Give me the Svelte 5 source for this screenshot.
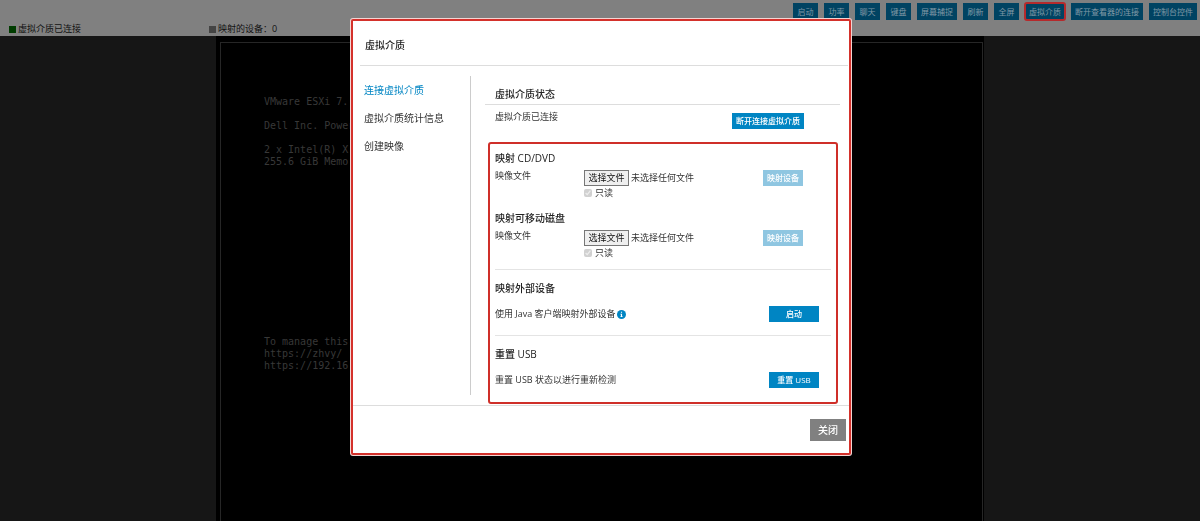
<script>
	const tools = ['启动', '功率', '聊天', '键盘', '屏幕捕捉', '刷新', '全屏', '虚拟介质', '断开查看器的连接', '控制台控件'];

	const tabs = ['连接虚拟介质', '虚拟介质统计信息', '创建映像'];

	const drives = [
		{ id: 'cd', title: '映射 CD/DVD' },
		{ id: 'disk', title: '映射可移动磁盘' }
	];

	const bootLines = ['VMware ESXi 7.', '', 'Dell Inc. Power', '', '2 x Intel(R) X', '255.6 GiB Memo'];
	const manageLines = ['To manage this', 'https://zhvy/', 'https://192.16'];

	let activeTool = $state('虚拟介质');
	let activeTab = $state(tabs[0]);
	let open = $state(true);
	let fileInputs = $state({});
	let files = $state({ cd: '', disk: '' });

	function selectTool(tool) {
		activeTool = tool;
		if (tool === '虚拟介质') open = true;
	}

	function selectTab(event, tab) {
		event.preventDefault();
		activeTab = tab;
	}
</script>

<div class="page">
	<header>
		<div class="toolbar">
			{#each tools as tool}
				<button class="tool" class:active={tool === activeTool} onclick={() => selectTool(tool)}>{tool}</button>
			{/each}
		</div>
		<div class="statusBar">
			<div class="status"><span class="square green"></span>虚拟介质已连接</div>
			<div class="status"><span class="square"></span>映射的设备：0</div>
		</div>
	</header>

	<main class="console">
		<div class="screen">
			<pre>{bootLines.join('\n')}</pre>
			<pre class="manage">{manageLines.join('\n')}</pre>
		</div>
	</main>
</div>

{#if open}
	<div class="overlay">
		<div class="modal" role="dialog" aria-labelledby="modalTitle">
			<h1 id="modalTitle">虚拟介质</h1>

			<div class="modalBody">
				<nav>
					{#each tabs as tab}
						<a href="#media" class:current={tab === activeTab} onclick={(e) => selectTab(e, tab)}>{tab}</a>
					{/each}
				</nav>

				<div class="content">
					<h2 class="statusTitle">虚拟介质状态</h2>
					<div class="connection">
						<span>虚拟介质已连接</span>
						<button class="action">断开连接虚拟介质</button>
					</div>

					<div class="mappings">
						{#each drives as drive}
							<section class="drive">
								<h2>{drive.title}</h2>
								<div class="driveRow">
									<label for="{drive.id}File">映像文件</label>
									<div class="picker">
										<input
											type="file"
											id="{drive.id}File"
											class="hiddenFile"
											bind:this={fileInputs[drive.id]}
											onchange={(e) => (files[drive.id] = e.target.files[0]?.name ?? '')}
										/>
										<button class="choose" onclick={() => fileInputs[drive.id].click()}>选择文件</button>
										<span>{files[drive.id] || '未选择任何文件'}</span>
									</div>
									<button class="action" disabled={!files[drive.id]}>映射设备</button>
									<label class="readOnly"><input type="checkbox" checked disabled />只读</label>
								</div>
							</section>
						{/each}

						<section class="device">
							<h2>映射外部设备</h2>
							<div class="deviceRow">
								<span>
									使用 Java 客户端映射外部设备<svg viewBox="0 0 16 16" aria-hidden="true">
										<circle cx="8" cy="8" r="8" fill="#0085c3" />
										<path d="M7 3h2v2H7zM6 6.500h3V11h1v1.500H6V11h1V8H6z" fill="#fff" />
									</svg>
								</span>
								<button class="action wide">启动</button>
							</div>
						</section>

						<section class="device">
							<h2>重置 USB</h2>
							<div class="deviceRow">
								<span>重置 USB 状态以进行重新检测</span>
								<button class="action wide">重置 USB</button>
							</div>
						</section>
					</div>
				</div>
			</div>

			<footer>
				<button class="close" onclick={() => (open = false)}>关闭</button>
			</footer>
		</div>
	</div>
{/if}

<style>
	:global(body) {
		background: #161616;
		font-family: 'Open Sans', 'Noto Sans CJK SC', sans-serif;
		font-size: 9px;
		line-height: 12px;
		color: #333;
	}

	button {
		font-family: inherit;
		border: none;
		padding: 0;
		cursor: pointer;
		white-space: nowrap;
	}

	h1,
	h2 {
		margin: 0;
		font-size: 10px;
		line-height: 14px;
		font-weight: 500;
		color: #222;
	}

	.page {
		display: flex;
		flex-direction: column;
		min-height: 100vh;
	}

	header {
		background: #808080;
		padding: 3px 3px 0;
	}

	.toolbar {
		display: flex;
		justify-content: flex-end;
		gap: 6px;
	}

	.tool {
		min-width: 25px;
		height: 17px;
		padding: 0 4px;
		background: #004362;
		color: #8099a6;
		font-size: 8px;
		line-height: 12px;
	}

	.tool.active {
		border-radius: 2px;
		outline: 2px solid #b52a2c;
		outline-offset: -1px;
	}

	.statusBar {
		display: grid;
		grid-template-columns: 200px 1fr;
		padding: 3px 6px 1px;
		color: #111;
	}

	.status {
		display: flex;
		align-items: center;
		gap: 2px;
	}

	.square {
		width: 7px;
		height: 7px;
		background: #444;
	}

	.square.green {
		background: #003c00;
	}

	.console {
		flex: 1;
		display: flex;
		width: 64%;
		box-sizing: border-box;
		margin: 0 auto;
		padding: 6px 1px 0 4px;
		background: #000;
	}

	.screen {
		flex: 1;
		border: 1px solid #262626;
		border-bottom: none;
		padding: 53px 43px 0;
	}

	pre {
		margin: 0;
		font-family: 'DejaVu Sans Mono', monospace;
		font-size: 10px;
		line-height: 12px;
		color: #383838;
	}

	.manage {
		margin-top: 168px;
	}

	.overlay {
		position: fixed;
		inset: 0;
		display: flex;
		justify-content: center;
		align-items: flex-start;
		padding: 19px 0 0 2px;
	}

	.modal {
		width: 100%;
		max-width: 500px;
		box-sizing: border-box;
		background: #fff;
		border: 2px solid #d4312b;
		border-radius: 2px;
		box-shadow: 0 0 0 1px #f3d5d3;
	}

	h1 {
		margin: 0 1px 0 7px;
		padding: 17px 5px 13px;
		border-bottom: 1px solid #ddd;
	}

	.modalBody {
		display: flex;
	}

	nav {
		display: flex;
		flex-direction: column;
		gap: 16px;
		width: 118px;
		box-sizing: border-box;
		margin: 10px 0;
		padding: 8px 0 0 11px;
		border-right: 1px solid #ccc;
		font-size: 10px;
	}

	nav a {
		color: #333;
		text-decoration: none;
	}

	nav a.current {
		color: #0085c3;
	}

	.content {
		flex: 1;
		padding: 21px 9px 1px 14px;
	}

	.statusTitle {
		padding: 0 10px 3px;
		border-bottom: 1px solid #ddd;
	}

	.connection {
		display: flex;
		justify-content: space-between;
		padding: 6px 36px 0 10px;
	}

	.connection .action {
		margin-top: 2px;
	}

	.action {
		height: 16px;
		padding: 0 4px;
		background: #0085c3;
		color: #fff;
		font-size: 8px;
		line-height: 12px;
		font-weight: 500;
	}

	.action:disabled {
		background: #8fc6e1;
		cursor: default;
	}

	.action.wide {
		width: 50px;
	}

	.mappings {
		margin: 13px 2px 0 3px;
		padding: 7px 5px 14px;
		border: 2px solid #cf2f29;
		border-radius: 3px;
	}

	.drive h2 {
		margin-bottom: 5px;
	}

	.drive + .drive {
		margin-top: 12px;
	}

	.driveRow {
		display: grid;
		grid-template-columns: 89px 1fr auto;
		row-gap: 1px;
		padding-right: 28px;
	}

	.picker {
		display: flex;
		align-items: center;
		gap: 2px;
	}

	.hiddenFile {
		position: absolute;
		width: 1px;
		height: 1px;
		opacity: 0;
	}

	.choose {
		height: 16px;
		width: 45px;
		background: #efefef;
		border: 1px solid #777;
		color: #111;
		font-size: 9px;
		line-height: 12px;
	}

	.readOnly {
		grid-column: 2;
		display: flex;
		align-items: center;
		gap: 3px;
	}

	.readOnly input {
		width: 8px;
		height: 8px;
		margin: 0;
	}

	.device {
		margin-top: 10px;
		padding-top: 11px;
		border-top: 1px solid #e4e4e4;
	}

	.device + .device {
		margin-top: 13px;
	}

	.device h2 {
		margin-bottom: 11px;
	}

	.deviceRow {
		display: flex;
		justify-content: space-between;
		align-items: center;
		padding-right: 12px;
	}

	.deviceRow span {
		display: flex;
		align-items: center;
		gap: 1px;
	}

	svg {
		width: 9px;
		height: 9px;
	}

	footer {
		display: flex;
		justify-content: flex-end;
		padding: 13px 3px 12px;
		border-top: 1px solid #ddd;
	}

	.close {
		height: 22px;
		padding: 0 8px;
		background: #808080;
		color: #fff;
		font-size: 10px;
		line-height: 14px;
		font-weight: 500;
	}
</style>
